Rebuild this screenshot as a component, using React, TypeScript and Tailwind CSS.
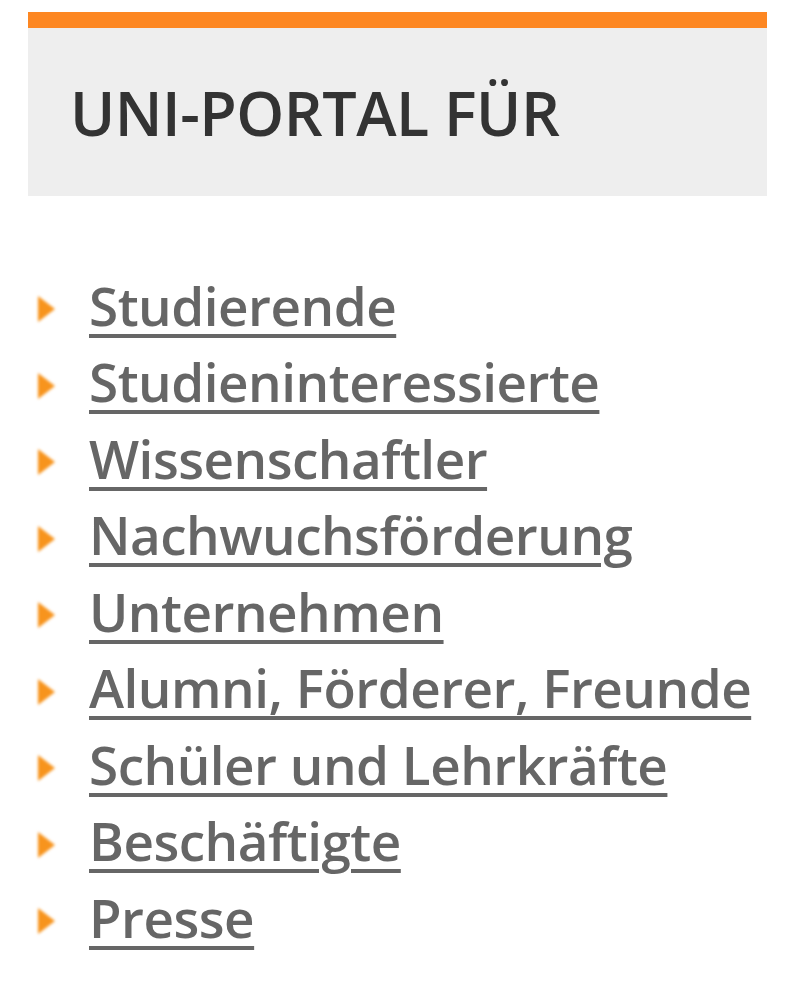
const links = [
  'Studierende',
  'Studieninteressierte',
  'Wissenschaftler',
  'Nachwuchsförderung',
  'Unternehmen',
  'Alumni, Förderer, Freunde',
  'Schüler und Lehrkräfte',
  'Beschäftigte',
  'Presse',
];

function Arrow() {
  return (
    <svg width="24" height="34" viewBox="0 0 24 34" className="shrink-0 blur-[1.5px] mt-[8px]">
      <path d="M4 4 L21 17 L4 30 Z" fill="#f7941d" />
    </svg>
  );
}

export default function App() {
  return (
    <div className="min-h-screen bg-white pt-3 px-7 font-['Open_Sans',sans-serif]">
      <div className="w-[739px]">
        <div className="h-4 bg-[#fd8722]" />
        <div className="bg-[#eeeeee] h-[168px] flex items-center pl-[42px]">
          <h2 className="text-[61px] font-semibold text-[#333333] leading-none tracking-[-0.5px] whitespace-nowrap">
            UNI-PORTAL FÜR
          </h2>
        </div>
        <ul className="mt-[71px] flex flex-col">
          {links.map((label) => (
            <li key={label} className="flex items-center h-[76.5px]">
              <div className="w-[61px] pl-[6px] flex items-center">
                <Arrow />
              </div>
              <a
                href="#"
                className="text-[53px] font-semibold text-[#666666] leading-none whitespace-nowrap underline decoration-[4px] underline-offset-[8px] tracking-[-0.5px]"
              >
                {label}
              </a>
            </li>
          ))}
        </ul>
      </div>
    </div>
  );
}
